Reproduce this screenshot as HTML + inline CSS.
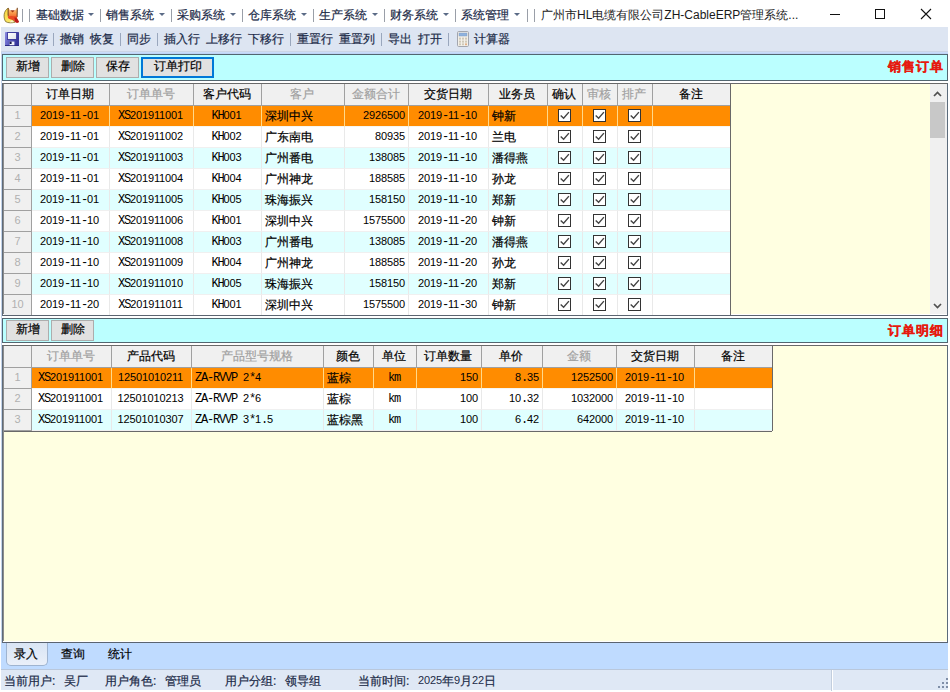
<!DOCTYPE html><html><head><meta charset="utf-8"><title>ZH-CableERP</title><style>
*{margin:0;padding:0;box-sizing:border-box}
html,body{width:950px;height:692px;overflow:hidden;background:#fff}
body{position:relative;-webkit-text-stroke:0.2px;font-family:"Liberation Sans",sans-serif;font-size:12px;line-height:12px;color:#000}
.abs{position:absolute}
.t{position:absolute;white-space:nowrap;font-size:12px;line-height:14px;height:14px}
.m{font-family:"Liberation Mono",monospace;font-size:12px;letter-spacing:-1.2px;position:relative;top:-1px}
.n,.m{-webkit-text-stroke:0}
.n{font-family:"Liberation Sans",sans-serif;font-size:11px;letter-spacing:-0.12px;position:relative;top:-1px}
/* title/menu bar */
#menubar{position:absolute;left:0;top:0;width:950px;height:27px;background:#fff}
.msep{position:absolute;top:9px;width:1px;height:13px;background:#9a9fa8}
.mt{position:absolute;top:8px;color:#1b2a47;font-size:12px;line-height:14px;white-space:nowrap}
.marr{position:absolute;top:13px;width:0;height:0;border-left:3px solid transparent;border-right:3px solid transparent;border-top:3px solid #5b6b86}
/* toolbar */
#toolbar{position:absolute;left:1px;top:27px;width:947px;height:25px;background:#dde5f2}
.tsep{position:absolute;top:33px;width:1px;height:13px;background:#9aa7bd}
.tt{position:absolute;top:32px;color:#1b2a47;font-size:12px;line-height:14px;white-space:nowrap}
/* panels */
.panel{position:absolute;left:2px;width:946px;background:#bbffff;border:1px solid #526670}
.btn{position:absolute;height:21px;background:#e1e1e1;border:1px solid #adadad;text-align:center;font-size:12px;line-height:17px;color:#000}
.btn.focus{border:2px solid #0078d7;line-height:15px}
.ptitle{position:absolute;-webkit-text-stroke:0.25px;right:6px;color:#e61a0f;font-weight:bold;font-size:13px;letter-spacing:1px;line-height:16px;white-space:nowrap}
/* grids */
.grid{position:absolute;left:2px;width:946px;background:#ffffe1;border-top:1px solid #696969;border-left:1px solid #5f6b78;border-right:1px solid #5b6b7b;border-bottom:1px solid #5b6470;overflow:hidden}
.cell{position:absolute;height:21px;overflow:hidden;white-space:nowrap;font-size:12px;line-height:14px;padding-top:3px}
.hd{background:#f0f0f0;border-right:1px solid #a0a0a0;border-bottom:1px solid #a0a0a0;text-align:center;color:#000;padding-top:3px;padding-right:2px}
.hd.ro{color:#a0a0a0}
.rh{background:#f0f0f0;border-right:1px solid #a0a0a0;border-bottom:1px solid #a0a0a0;text-align:center;color:#b0b0b0}
.d{border-right:1px solid #e9e9e9;border-bottom:1px solid #f0f0f0;padding-left:3px;padding-right:3px}
.d.c{text-align:center;padding-right:5px}.d.r{text-align:right}.d.l{text-align:left}
.r0{background:#fff}.r1{background:#e0ffff}
.sel{background:#ff8c00;border-right:1px solid #ffd98a;border-bottom:1px solid #f6f6f0}
.cb{position:absolute;width:13px;height:13px;background:#fff;border:1px solid #333}
.cb svg{position:absolute;left:-1px;top:-1px}
</style></head><body>
<div id="menubar">
<svg class="abs" style="left:3px;top:7px" width="17" height="17" viewBox="0 0 17 17">
<defs><linearGradient id="fx" x1="0" y1="0" x2="0" y2="1"><stop offset="0" stop-color="#fdc88a"/><stop offset="0.45" stop-color="#f99a4a"/><stop offset="1" stop-color="#ee4a22"/></linearGradient>
<linearGradient id="fy" x1="0" y1="0" x2="1" y2="1"><stop offset="0" stop-color="#f7d23c"/><stop offset="1" stop-color="#fdf27a"/></linearGradient></defs>
<path d="M5.2 1.2 C0.6 3.5 0 10.5 2.6 14.6 C5 16.2 9.5 16 12 15.2 L8 11 L5.2 8 Z" fill="url(#fy)" stroke="#7a6a2a" stroke-width="0.8"/>
<path d="M5.3 1 L7.4 3.4 L9.6 4.6 L11.8 3.4 L14.4 0.8 L14.2 10.6 L10 12.4 L5 11.2 Z" fill="url(#fx)"/>
<path d="M7.2 3.3 L11.9 3.3 L9.6 5.4 Z" fill="#a8380f"/>
<path d="M5.3 1 L5.2 9" stroke="#7a4a18" stroke-width="0.9" fill="none"/>
<path d="M14.3 0.8 L14.1 10" stroke="#5a3014" stroke-width="0.9" fill="none"/>
<path d="M4.4 9.6 C6.5 8.6 10 9 14 9.4 L14.1 11.4 L16 15 C15 16.1 13 15.9 12.2 15 L10 12.8 C7.8 13 5.4 11.8 4.4 9.6 Z" fill="#ea4a22"/>
<path d="M11.4 10.6 C13 10.2 14.6 11.6 16 14.8 C15.2 16.2 13.2 16 12.3 15 Z" fill="#b81a1a"/>
<path d="M8.8 13.2 L11.2 15.3 L6.6 15.3 Z" fill="#fbf0d4"/>
</svg>
<div class="msep" style="left:22px"></div>
<div class="msep" style="left:29px"></div>
<div class="mt" style="left:36px">基础数据</div>
<div class="marr" style="left:88px"></div>
<div class="msep" style="left:100px"></div>
<div class="mt" style="left:106px">销售系统</div>
<div class="marr" style="left:159px"></div>
<div class="msep" style="left:171px"></div>
<div class="mt" style="left:177px">采购系统</div>
<div class="marr" style="left:230px"></div>
<div class="msep" style="left:242px"></div>
<div class="mt" style="left:248px">仓库系统</div>
<div class="marr" style="left:301px"></div>
<div class="msep" style="left:313px"></div>
<div class="mt" style="left:319px">生产系统</div>
<div class="marr" style="left:372px"></div>
<div class="msep" style="left:384px"></div>
<div class="mt" style="left:390px">财务系统</div>
<div class="marr" style="left:443px"></div>
<div class="msep" style="left:455px"></div>
<div class="mt" style="left:461px">系统管理</div>
<div class="marr" style="left:514px"></div>
<div class="msep" style="left:527px"></div>
<div class="msep" style="left:534px"></div>
<div class="mt" style="left:541px;color:#1a1a1a;-webkit-text-stroke:0">广州市HL电缆有限公司ZH-CableERP管理系统...</div>
<div class="abs" style="left:830px;top:14px;width:10px;height:1px;background:#111"></div>
<div class="abs" style="left:875px;top:9px;width:10px;height:10px;border:1px solid #111"></div>
<svg class="abs" style="left:920px;top:8px" width="12" height="12" viewBox="0 0 12 12"><path d="M1 1 L11 11 M11 1 L1 11" stroke="#111" stroke-width="1.1" fill="none"/></svg>
</div>
<div id="toolbar"></div>
<div class="abs" style="left:1px;top:51px;width:947px;height:1px;background:#ccd5e5"></div>
<div class="abs" style="left:1px;top:52px;width:947px;height:1px;background:#c9dcfa"></div>
<div class="abs" style="left:1px;top:53px;width:947px;height:1px;background:#bfd4f5"></div>
<svg class="abs" style="left:5px;top:32px" width="14" height="14" viewBox="0 0 14 14">
<defs><linearGradient id="sv" x1="0" y1="0" x2="1" y2="0.3"><stop offset="0" stop-color="#8a8ae0"/><stop offset="0.5" stop-color="#5a5abe"/><stop offset="1" stop-color="#36369a"/></linearGradient>
<linearGradient id="sw" x1="0" y1="0" x2="1" y2="1"><stop offset="0" stop-color="#ffffff"/><stop offset="1" stop-color="#dfe4ea"/></linearGradient></defs>
<rect x="0" y="0" width="14" height="14" rx="0.6" fill="url(#sv)"/>
<rect x="0" y="13" width="14" height="1" fill="#2c2c86"/>
<rect x="3" y="1" width="8.2" height="6" fill="url(#sw)"/>
<rect x="2.4" y="0.6" width="9.4" height="7" fill="none" stroke="#3a3a96" stroke-width="0.8"/>
<rect x="4.6" y="9.6" width="4.8" height="3.6" fill="#f2f4fa"/>
<rect x="4.6" y="9.6" width="2" height="2.4" fill="#16164a"/>
</svg>
<div class="tt" style="left:24px">保存</div>
<div class="tt" style="left:60px">撤销</div>
<div class="tt" style="left:90px">恢复</div>
<div class="tt" style="left:127px">同步</div>
<div class="tt" style="left:164px">插入行</div>
<div class="tt" style="left:206px">上移行</div>
<div class="tt" style="left:248px">下移行</div>
<div class="tt" style="left:297px">重置行</div>
<div class="tt" style="left:339px">重置列</div>
<div class="tt" style="left:388px">导出</div>
<div class="tt" style="left:418px">打开</div>
<div class="tt" style="left:474px">计算器</div>
<div class="tsep" style="left:53px"></div>
<div class="tsep" style="left:120px"></div>
<div class="tsep" style="left:157px"></div>
<div class="tsep" style="left:290px"></div>
<div class="tsep" style="left:381px"></div>
<div class="tsep" style="left:448px"></div>
<svg class="abs" style="left:457px;top:31px" width="12" height="16" viewBox="0 0 12 16">
<rect x="0.5" y="0.5" width="11" height="15" rx="1.2" fill="#f3f0e9" stroke="#a3a6ae"/>
<rect x="2" y="2" width="8" height="3" fill="#8fb2de" stroke="#7f9cc4" stroke-width="0.5"/>
<g fill="#cfc8b8"><rect x="2" y="6.6" width="2" height="2"/><rect x="5" y="6.6" width="2" height="2"/><rect x="8" y="6.6" width="2" height="2"/>
<rect x="2" y="9.6" width="2" height="2"/><rect x="5" y="9.6" width="2" height="2"/><rect x="8" y="9.6" width="2" height="2"/>
<rect x="2" y="12.4" width="2" height="1.8"/><rect x="5" y="12.4" width="2" height="1.8"/><rect x="8" y="12.4" width="2" height="1.8" fill="#e0b088"/></g>
</svg>
<div class="abs" style="left:1px;top:52px;width:1px;height:591px;background:#c3d3ea"></div>
<div class="panel" style="top:54px;height:27px"></div>
<div class="btn" style="left:6px;top:57px;width:43px">新增</div>
<div class="btn" style="left:51px;top:57px;width:43px">删除</div>
<div class="btn" style="left:96px;top:57px;width:43px">保存</div>
<div class="btn focus" style="left:141px;top:57px;width:73px">订单打印</div>
<div class="ptitle" style="top:59px">销售订单</div>
<div class="grid" style="top:83px;height:233px">
<div class="abs" style="left:0;top:0;width:1px;height:233px;background:#8c8c8c"></div>
<div class="abs" style="left:0;top:230px;width:944px;height:1px;background:#fff"></div>
<div class="cell hd" style="left:1px;top:0px;width:28px;height:22px;"></div>
<div class="cell hd" style="left:29px;top:0px;width:78px;height:22px;">订单日期</div>
<div class="cell hd ro" style="left:107px;top:0px;width:84px;height:22px;">订单单号</div>
<div class="cell hd" style="left:191px;top:0px;width:68px;height:22px;">客户代码</div>
<div class="cell hd ro" style="left:259px;top:0px;width:83px;height:22px;">客户</div>
<div class="cell hd ro" style="left:342px;top:0px;width:64px;height:22px;">金额合计</div>
<div class="cell hd" style="left:406px;top:0px;width:80px;height:22px;">交货日期</div>
<div class="cell hd" style="left:486px;top:0px;width:59px;height:22px;">业务员</div>
<div class="cell hd" style="left:545px;top:0px;width:35px;height:22px;">确认</div>
<div class="cell hd ro" style="left:580px;top:0px;width:35px;height:22px;">审核</div>
<div class="cell hd ro" style="left:615px;top:0px;width:35px;height:22px;">排产</div>
<div class="cell hd" style="left:650px;top:0px;width:78px;height:22px;">备注</div>
<div class="cell rh" style="left:1px;top:22px;width:28px;height:21px;"><span class="n">1</span></div>
<div class="cell d c sel" style="left:29px;top:22px;width:78px;height:21px;"><span class="n">2019</span><span class="m">-</span><span class="n">11</span><span class="m">-</span><span class="n">01</span></div>
<div class="cell d c sel" style="left:107px;top:22px;width:84px;height:21px;"><span class="m">XS</span><span class="n">201911001</span></div>
<div class="cell d c sel" style="left:191px;top:22px;width:68px;height:21px;"><span class="m">KH</span><span class="n">001</span></div>
<div class="cell d l sel" style="left:259px;top:22px;width:83px;height:21px;">深圳中兴</div>
<div class="cell d r sel" style="left:342px;top:22px;width:64px;height:21px;"><span class="n">2926500</span></div>
<div class="cell d c sel" style="left:406px;top:22px;width:80px;height:21px;"><span class="n">2019</span><span class="m">-</span><span class="n">11</span><span class="m">-</span><span class="n">10</span></div>
<div class="cell d l sel" style="left:486px;top:22px;width:59px;height:21px;">钟新</div>
<div class="cell d sel" style="left:545px;top:22px;width:35px;height:21px;padding:0;"><div class="cb" style="left:10px;top:3px"><svg width="13" height="13" viewBox="0 0 13 13"><path d="M2.7 6.5 L5.6 9.3 L10.9 3.1" stroke="#444" stroke-width="1.4" fill="none"/></svg></div></div>
<div class="cell d sel" style="left:580px;top:22px;width:35px;height:21px;padding:0;"><div class="cb" style="left:10px;top:3px"><svg width="13" height="13" viewBox="0 0 13 13"><path d="M2.7 6.5 L5.6 9.3 L10.9 3.1" stroke="#444" stroke-width="1.4" fill="none"/></svg></div></div>
<div class="cell d sel" style="left:615px;top:22px;width:35px;height:21px;padding:0;"><div class="cb" style="left:10px;top:3px"><svg width="13" height="13" viewBox="0 0 13 13"><path d="M2.7 6.5 L5.6 9.3 L10.9 3.1" stroke="#444" stroke-width="1.4" fill="none"/></svg></div></div>
<div class="cell d l sel" style="left:650px;top:22px;width:78px;height:21px;"></div>
<div class="cell rh" style="left:1px;top:43px;width:28px;height:21px;"><span class="n">2</span></div>
<div class="cell d c r0" style="left:29px;top:43px;width:78px;height:21px;"><span class="n">2019</span><span class="m">-</span><span class="n">11</span><span class="m">-</span><span class="n">01</span></div>
<div class="cell d c r0" style="left:107px;top:43px;width:84px;height:21px;"><span class="m">XS</span><span class="n">201911002</span></div>
<div class="cell d c r0" style="left:191px;top:43px;width:68px;height:21px;"><span class="m">KH</span><span class="n">002</span></div>
<div class="cell d l r0" style="left:259px;top:43px;width:83px;height:21px;">广东南电</div>
<div class="cell d r r0" style="left:342px;top:43px;width:64px;height:21px;"><span class="n">80935</span></div>
<div class="cell d c r0" style="left:406px;top:43px;width:80px;height:21px;"><span class="n">2019</span><span class="m">-</span><span class="n">11</span><span class="m">-</span><span class="n">10</span></div>
<div class="cell d l r0" style="left:486px;top:43px;width:59px;height:21px;">兰电</div>
<div class="cell d r0" style="left:545px;top:43px;width:35px;height:21px;padding:0;"><div class="cb" style="left:10px;top:3px"><svg width="13" height="13" viewBox="0 0 13 13"><path d="M2.7 6.5 L5.6 9.3 L10.9 3.1" stroke="#444" stroke-width="1.4" fill="none"/></svg></div></div>
<div class="cell d r0" style="left:580px;top:43px;width:35px;height:21px;padding:0;"><div class="cb" style="left:10px;top:3px"><svg width="13" height="13" viewBox="0 0 13 13"><path d="M2.7 6.5 L5.6 9.3 L10.9 3.1" stroke="#444" stroke-width="1.4" fill="none"/></svg></div></div>
<div class="cell d r0" style="left:615px;top:43px;width:35px;height:21px;padding:0;"><div class="cb" style="left:10px;top:3px"><svg width="13" height="13" viewBox="0 0 13 13"><path d="M2.7 6.5 L5.6 9.3 L10.9 3.1" stroke="#444" stroke-width="1.4" fill="none"/></svg></div></div>
<div class="cell d l r0" style="left:650px;top:43px;width:78px;height:21px;"></div>
<div class="cell rh" style="left:1px;top:64px;width:28px;height:21px;"><span class="n">3</span></div>
<div class="cell d c r1" style="left:29px;top:64px;width:78px;height:21px;"><span class="n">2019</span><span class="m">-</span><span class="n">11</span><span class="m">-</span><span class="n">01</span></div>
<div class="cell d c r1" style="left:107px;top:64px;width:84px;height:21px;"><span class="m">XS</span><span class="n">201911003</span></div>
<div class="cell d c r1" style="left:191px;top:64px;width:68px;height:21px;"><span class="m">KH</span><span class="n">003</span></div>
<div class="cell d l r1" style="left:259px;top:64px;width:83px;height:21px;">广州番电</div>
<div class="cell d r r1" style="left:342px;top:64px;width:64px;height:21px;"><span class="n">138085</span></div>
<div class="cell d c r1" style="left:406px;top:64px;width:80px;height:21px;"><span class="n">2019</span><span class="m">-</span><span class="n">11</span><span class="m">-</span><span class="n">10</span></div>
<div class="cell d l r1" style="left:486px;top:64px;width:59px;height:21px;">潘得燕</div>
<div class="cell d r1" style="left:545px;top:64px;width:35px;height:21px;padding:0;"><div class="cb" style="left:10px;top:3px"><svg width="13" height="13" viewBox="0 0 13 13"><path d="M2.7 6.5 L5.6 9.3 L10.9 3.1" stroke="#444" stroke-width="1.4" fill="none"/></svg></div></div>
<div class="cell d r1" style="left:580px;top:64px;width:35px;height:21px;padding:0;"><div class="cb" style="left:10px;top:3px"><svg width="13" height="13" viewBox="0 0 13 13"><path d="M2.7 6.5 L5.6 9.3 L10.9 3.1" stroke="#444" stroke-width="1.4" fill="none"/></svg></div></div>
<div class="cell d r1" style="left:615px;top:64px;width:35px;height:21px;padding:0;"><div class="cb" style="left:10px;top:3px"><svg width="13" height="13" viewBox="0 0 13 13"><path d="M2.7 6.5 L5.6 9.3 L10.9 3.1" stroke="#444" stroke-width="1.4" fill="none"/></svg></div></div>
<div class="cell d l r1" style="left:650px;top:64px;width:78px;height:21px;"></div>
<div class="cell rh" style="left:1px;top:85px;width:28px;height:21px;"><span class="n">4</span></div>
<div class="cell d c r0" style="left:29px;top:85px;width:78px;height:21px;"><span class="n">2019</span><span class="m">-</span><span class="n">11</span><span class="m">-</span><span class="n">01</span></div>
<div class="cell d c r0" style="left:107px;top:85px;width:84px;height:21px;"><span class="m">XS</span><span class="n">201911004</span></div>
<div class="cell d c r0" style="left:191px;top:85px;width:68px;height:21px;"><span class="m">KH</span><span class="n">004</span></div>
<div class="cell d l r0" style="left:259px;top:85px;width:83px;height:21px;">广州神龙</div>
<div class="cell d r r0" style="left:342px;top:85px;width:64px;height:21px;"><span class="n">188585</span></div>
<div class="cell d c r0" style="left:406px;top:85px;width:80px;height:21px;"><span class="n">2019</span><span class="m">-</span><span class="n">11</span><span class="m">-</span><span class="n">10</span></div>
<div class="cell d l r0" style="left:486px;top:85px;width:59px;height:21px;">孙龙</div>
<div class="cell d r0" style="left:545px;top:85px;width:35px;height:21px;padding:0;"><div class="cb" style="left:10px;top:3px"><svg width="13" height="13" viewBox="0 0 13 13"><path d="M2.7 6.5 L5.6 9.3 L10.9 3.1" stroke="#444" stroke-width="1.4" fill="none"/></svg></div></div>
<div class="cell d r0" style="left:580px;top:85px;width:35px;height:21px;padding:0;"><div class="cb" style="left:10px;top:3px"><svg width="13" height="13" viewBox="0 0 13 13"><path d="M2.7 6.5 L5.6 9.3 L10.9 3.1" stroke="#444" stroke-width="1.4" fill="none"/></svg></div></div>
<div class="cell d r0" style="left:615px;top:85px;width:35px;height:21px;padding:0;"><div class="cb" style="left:10px;top:3px"><svg width="13" height="13" viewBox="0 0 13 13"><path d="M2.7 6.5 L5.6 9.3 L10.9 3.1" stroke="#444" stroke-width="1.4" fill="none"/></svg></div></div>
<div class="cell d l r0" style="left:650px;top:85px;width:78px;height:21px;"></div>
<div class="cell rh" style="left:1px;top:106px;width:28px;height:21px;"><span class="n">5</span></div>
<div class="cell d c r1" style="left:29px;top:106px;width:78px;height:21px;"><span class="n">2019</span><span class="m">-</span><span class="n">11</span><span class="m">-</span><span class="n">01</span></div>
<div class="cell d c r1" style="left:107px;top:106px;width:84px;height:21px;"><span class="m">XS</span><span class="n">201911005</span></div>
<div class="cell d c r1" style="left:191px;top:106px;width:68px;height:21px;"><span class="m">KH</span><span class="n">005</span></div>
<div class="cell d l r1" style="left:259px;top:106px;width:83px;height:21px;">珠海振兴</div>
<div class="cell d r r1" style="left:342px;top:106px;width:64px;height:21px;"><span class="n">158150</span></div>
<div class="cell d c r1" style="left:406px;top:106px;width:80px;height:21px;"><span class="n">2019</span><span class="m">-</span><span class="n">11</span><span class="m">-</span><span class="n">10</span></div>
<div class="cell d l r1" style="left:486px;top:106px;width:59px;height:21px;">郑新</div>
<div class="cell d r1" style="left:545px;top:106px;width:35px;height:21px;padding:0;"><div class="cb" style="left:10px;top:3px"><svg width="13" height="13" viewBox="0 0 13 13"><path d="M2.7 6.5 L5.6 9.3 L10.9 3.1" stroke="#444" stroke-width="1.4" fill="none"/></svg></div></div>
<div class="cell d r1" style="left:580px;top:106px;width:35px;height:21px;padding:0;"><div class="cb" style="left:10px;top:3px"><svg width="13" height="13" viewBox="0 0 13 13"><path d="M2.7 6.5 L5.6 9.3 L10.9 3.1" stroke="#444" stroke-width="1.4" fill="none"/></svg></div></div>
<div class="cell d r1" style="left:615px;top:106px;width:35px;height:21px;padding:0;"><div class="cb" style="left:10px;top:3px"><svg width="13" height="13" viewBox="0 0 13 13"><path d="M2.7 6.5 L5.6 9.3 L10.9 3.1" stroke="#444" stroke-width="1.4" fill="none"/></svg></div></div>
<div class="cell d l r1" style="left:650px;top:106px;width:78px;height:21px;"></div>
<div class="cell rh" style="left:1px;top:127px;width:28px;height:21px;"><span class="n">6</span></div>
<div class="cell d c r0" style="left:29px;top:127px;width:78px;height:21px;"><span class="n">2019</span><span class="m">-</span><span class="n">11</span><span class="m">-</span><span class="n">10</span></div>
<div class="cell d c r0" style="left:107px;top:127px;width:84px;height:21px;"><span class="m">XS</span><span class="n">201911006</span></div>
<div class="cell d c r0" style="left:191px;top:127px;width:68px;height:21px;"><span class="m">KH</span><span class="n">001</span></div>
<div class="cell d l r0" style="left:259px;top:127px;width:83px;height:21px;">深圳中兴</div>
<div class="cell d r r0" style="left:342px;top:127px;width:64px;height:21px;"><span class="n">1575500</span></div>
<div class="cell d c r0" style="left:406px;top:127px;width:80px;height:21px;"><span class="n">2019</span><span class="m">-</span><span class="n">11</span><span class="m">-</span><span class="n">20</span></div>
<div class="cell d l r0" style="left:486px;top:127px;width:59px;height:21px;">钟新</div>
<div class="cell d r0" style="left:545px;top:127px;width:35px;height:21px;padding:0;"><div class="cb" style="left:10px;top:3px"><svg width="13" height="13" viewBox="0 0 13 13"><path d="M2.7 6.5 L5.6 9.3 L10.9 3.1" stroke="#444" stroke-width="1.4" fill="none"/></svg></div></div>
<div class="cell d r0" style="left:580px;top:127px;width:35px;height:21px;padding:0;"><div class="cb" style="left:10px;top:3px"><svg width="13" height="13" viewBox="0 0 13 13"><path d="M2.7 6.5 L5.6 9.3 L10.9 3.1" stroke="#444" stroke-width="1.4" fill="none"/></svg></div></div>
<div class="cell d r0" style="left:615px;top:127px;width:35px;height:21px;padding:0;"><div class="cb" style="left:10px;top:3px"><svg width="13" height="13" viewBox="0 0 13 13"><path d="M2.7 6.5 L5.6 9.3 L10.9 3.1" stroke="#444" stroke-width="1.4" fill="none"/></svg></div></div>
<div class="cell d l r0" style="left:650px;top:127px;width:78px;height:21px;"></div>
<div class="cell rh" style="left:1px;top:148px;width:28px;height:21px;"><span class="n">7</span></div>
<div class="cell d c r1" style="left:29px;top:148px;width:78px;height:21px;"><span class="n">2019</span><span class="m">-</span><span class="n">11</span><span class="m">-</span><span class="n">10</span></div>
<div class="cell d c r1" style="left:107px;top:148px;width:84px;height:21px;"><span class="m">XS</span><span class="n">201911008</span></div>
<div class="cell d c r1" style="left:191px;top:148px;width:68px;height:21px;"><span class="m">KH</span><span class="n">003</span></div>
<div class="cell d l r1" style="left:259px;top:148px;width:83px;height:21px;">广州番电</div>
<div class="cell d r r1" style="left:342px;top:148px;width:64px;height:21px;"><span class="n">138085</span></div>
<div class="cell d c r1" style="left:406px;top:148px;width:80px;height:21px;"><span class="n">2019</span><span class="m">-</span><span class="n">11</span><span class="m">-</span><span class="n">20</span></div>
<div class="cell d l r1" style="left:486px;top:148px;width:59px;height:21px;">潘得燕</div>
<div class="cell d r1" style="left:545px;top:148px;width:35px;height:21px;padding:0;"><div class="cb" style="left:10px;top:3px"><svg width="13" height="13" viewBox="0 0 13 13"><path d="M2.7 6.5 L5.6 9.3 L10.9 3.1" stroke="#444" stroke-width="1.4" fill="none"/></svg></div></div>
<div class="cell d r1" style="left:580px;top:148px;width:35px;height:21px;padding:0;"><div class="cb" style="left:10px;top:3px"><svg width="13" height="13" viewBox="0 0 13 13"><path d="M2.7 6.5 L5.6 9.3 L10.9 3.1" stroke="#444" stroke-width="1.4" fill="none"/></svg></div></div>
<div class="cell d r1" style="left:615px;top:148px;width:35px;height:21px;padding:0;"><div class="cb" style="left:10px;top:3px"><svg width="13" height="13" viewBox="0 0 13 13"><path d="M2.7 6.5 L5.6 9.3 L10.9 3.1" stroke="#444" stroke-width="1.4" fill="none"/></svg></div></div>
<div class="cell d l r1" style="left:650px;top:148px;width:78px;height:21px;"></div>
<div class="cell rh" style="left:1px;top:169px;width:28px;height:21px;"><span class="n">8</span></div>
<div class="cell d c r0" style="left:29px;top:169px;width:78px;height:21px;"><span class="n">2019</span><span class="m">-</span><span class="n">11</span><span class="m">-</span><span class="n">10</span></div>
<div class="cell d c r0" style="left:107px;top:169px;width:84px;height:21px;"><span class="m">XS</span><span class="n">201911009</span></div>
<div class="cell d c r0" style="left:191px;top:169px;width:68px;height:21px;"><span class="m">KH</span><span class="n">004</span></div>
<div class="cell d l r0" style="left:259px;top:169px;width:83px;height:21px;">广州神龙</div>
<div class="cell d r r0" style="left:342px;top:169px;width:64px;height:21px;"><span class="n">188585</span></div>
<div class="cell d c r0" style="left:406px;top:169px;width:80px;height:21px;"><span class="n">2019</span><span class="m">-</span><span class="n">11</span><span class="m">-</span><span class="n">20</span></div>
<div class="cell d l r0" style="left:486px;top:169px;width:59px;height:21px;">孙龙</div>
<div class="cell d r0" style="left:545px;top:169px;width:35px;height:21px;padding:0;"><div class="cb" style="left:10px;top:3px"><svg width="13" height="13" viewBox="0 0 13 13"><path d="M2.7 6.5 L5.6 9.3 L10.9 3.1" stroke="#444" stroke-width="1.4" fill="none"/></svg></div></div>
<div class="cell d r0" style="left:580px;top:169px;width:35px;height:21px;padding:0;"><div class="cb" style="left:10px;top:3px"><svg width="13" height="13" viewBox="0 0 13 13"><path d="M2.7 6.5 L5.6 9.3 L10.9 3.1" stroke="#444" stroke-width="1.4" fill="none"/></svg></div></div>
<div class="cell d r0" style="left:615px;top:169px;width:35px;height:21px;padding:0;"><div class="cb" style="left:10px;top:3px"><svg width="13" height="13" viewBox="0 0 13 13"><path d="M2.7 6.5 L5.6 9.3 L10.9 3.1" stroke="#444" stroke-width="1.4" fill="none"/></svg></div></div>
<div class="cell d l r0" style="left:650px;top:169px;width:78px;height:21px;"></div>
<div class="cell rh" style="left:1px;top:190px;width:28px;height:21px;"><span class="n">9</span></div>
<div class="cell d c r1" style="left:29px;top:190px;width:78px;height:21px;"><span class="n">2019</span><span class="m">-</span><span class="n">11</span><span class="m">-</span><span class="n">10</span></div>
<div class="cell d c r1" style="left:107px;top:190px;width:84px;height:21px;"><span class="m">XS</span><span class="n">201911010</span></div>
<div class="cell d c r1" style="left:191px;top:190px;width:68px;height:21px;"><span class="m">KH</span><span class="n">005</span></div>
<div class="cell d l r1" style="left:259px;top:190px;width:83px;height:21px;">珠海振兴</div>
<div class="cell d r r1" style="left:342px;top:190px;width:64px;height:21px;"><span class="n">158150</span></div>
<div class="cell d c r1" style="left:406px;top:190px;width:80px;height:21px;"><span class="n">2019</span><span class="m">-</span><span class="n">11</span><span class="m">-</span><span class="n">20</span></div>
<div class="cell d l r1" style="left:486px;top:190px;width:59px;height:21px;">郑新</div>
<div class="cell d r1" style="left:545px;top:190px;width:35px;height:21px;padding:0;"><div class="cb" style="left:10px;top:3px"><svg width="13" height="13" viewBox="0 0 13 13"><path d="M2.7 6.5 L5.6 9.3 L10.9 3.1" stroke="#444" stroke-width="1.4" fill="none"/></svg></div></div>
<div class="cell d r1" style="left:580px;top:190px;width:35px;height:21px;padding:0;"><div class="cb" style="left:10px;top:3px"><svg width="13" height="13" viewBox="0 0 13 13"><path d="M2.7 6.5 L5.6 9.3 L10.9 3.1" stroke="#444" stroke-width="1.4" fill="none"/></svg></div></div>
<div class="cell d r1" style="left:615px;top:190px;width:35px;height:21px;padding:0;"><div class="cb" style="left:10px;top:3px"><svg width="13" height="13" viewBox="0 0 13 13"><path d="M2.7 6.5 L5.6 9.3 L10.9 3.1" stroke="#444" stroke-width="1.4" fill="none"/></svg></div></div>
<div class="cell d l r1" style="left:650px;top:190px;width:78px;height:21px;"></div>
<div class="cell rh" style="left:1px;top:211px;width:28px;height:21px;"><span class="n">10</span></div>
<div class="cell d c r0" style="left:29px;top:211px;width:78px;height:21px;"><span class="n">2019</span><span class="m">-</span><span class="n">11</span><span class="m">-</span><span class="n">20</span></div>
<div class="cell d c r0" style="left:107px;top:211px;width:84px;height:21px;"><span class="m">XS</span><span class="n">201911011</span></div>
<div class="cell d c r0" style="left:191px;top:211px;width:68px;height:21px;"><span class="m">KH</span><span class="n">001</span></div>
<div class="cell d l r0" style="left:259px;top:211px;width:83px;height:21px;">深圳中兴</div>
<div class="cell d r r0" style="left:342px;top:211px;width:64px;height:21px;"><span class="n">1575500</span></div>
<div class="cell d c r0" style="left:406px;top:211px;width:80px;height:21px;"><span class="n">2019</span><span class="m">-</span><span class="n">11</span><span class="m">-</span><span class="n">30</span></div>
<div class="cell d l r0" style="left:486px;top:211px;width:59px;height:21px;">钟新</div>
<div class="cell d r0" style="left:545px;top:211px;width:35px;height:21px;padding:0;"><div class="cb" style="left:10px;top:3px"><svg width="13" height="13" viewBox="0 0 13 13"><path d="M2.7 6.5 L5.6 9.3 L10.9 3.1" stroke="#444" stroke-width="1.4" fill="none"/></svg></div></div>
<div class="cell d r0" style="left:580px;top:211px;width:35px;height:21px;padding:0;"><div class="cb" style="left:10px;top:3px"><svg width="13" height="13" viewBox="0 0 13 13"><path d="M2.7 6.5 L5.6 9.3 L10.9 3.1" stroke="#444" stroke-width="1.4" fill="none"/></svg></div></div>
<div class="cell d r0" style="left:615px;top:211px;width:35px;height:21px;padding:0;"><div class="cb" style="left:10px;top:3px"><svg width="13" height="13" viewBox="0 0 13 13"><path d="M2.7 6.5 L5.6 9.3 L10.9 3.1" stroke="#444" stroke-width="1.4" fill="none"/></svg></div></div>
<div class="cell d l r0" style="left:650px;top:211px;width:78px;height:21px;"></div>
<div class="abs" style="left:727px;top:0;width:1px;height:232px;background:#696969"></div>
<div class="abs" style="left:927px;top:0;width:17px;height:230px;background:#f0f0f0"></div>
<div class="abs" style="left:927px;top:18px;width:15px;height:36px;background:#c8c8c8"></div>
<svg class="abs" style="left:930px;top:7px" width="9" height="6" viewBox="0 0 9 6"><path d="M1 5 L4.5 1.5 L8 5" stroke="#505050" stroke-width="1.7" fill="none"/></svg>
<svg class="abs" style="left:930px;top:219px" width="9" height="6" viewBox="0 0 9 6"><path d="M1 1 L4.5 4.5 L8 1" stroke="#505050" stroke-width="1.7" fill="none"/></svg>
</div>
<div class="panel" style="top:318px;height:25px"></div>
<div class="btn" style="left:6px;top:320px;width:43px">新增</div>
<div class="btn" style="left:51px;top:320px;width:43px">删除</div>
<div class="ptitle" style="top:323px">订单明细</div>
<div class="grid" style="top:345px;height:298px">
<div class="abs" style="left:0;top:0;width:1px;height:298px;background:#8c8c8c"></div>
<div class="abs" style="left:0;top:295px;width:944px;height:1px;background:#fff"></div>
<div class="cell hd" style="left:1px;top:0px;width:28px;height:22px;"></div>
<div class="cell hd ro" style="left:29px;top:0px;width:80px;height:22px;">订单单号</div>
<div class="cell hd" style="left:109px;top:0px;width:80px;height:22px;">产品代码</div>
<div class="cell hd ro" style="left:189px;top:0px;width:132px;height:22px;">产品型号规格</div>
<div class="cell hd" style="left:321px;top:0px;width:50px;height:22px;">颜色</div>
<div class="cell hd" style="left:371px;top:0px;width:43px;height:22px;">单位</div>
<div class="cell hd" style="left:414px;top:0px;width:65px;height:22px;">订单数量</div>
<div class="cell hd" style="left:479px;top:0px;width:61px;height:22px;">单价</div>
<div class="cell hd ro" style="left:540px;top:0px;width:74px;height:22px;">金额</div>
<div class="cell hd" style="left:614px;top:0px;width:78px;height:22px;">交货日期</div>
<div class="cell hd" style="left:692px;top:0px;width:78px;height:22px;">备注</div>
<div class="cell rh" style="left:1px;top:22px;width:28px;height:21px;"><span class="n">1</span></div>
<div class="cell d c sel" style="left:29px;top:22px;width:80px;height:21px;"><span class="m">XS</span><span class="n">201911001</span></div>
<div class="cell d c sel" style="left:109px;top:22px;width:80px;height:21px;"><span class="n">12501010211</span></div>
<div class="cell d l sel" style="left:189px;top:22px;width:132px;height:21px;"><span class="m">ZA-RVVP </span><span class="n">2</span><span class="m">*</span><span class="n">4</span></div>
<div class="cell d l sel" style="left:321px;top:22px;width:50px;height:21px;">蓝棕</div>
<div class="cell d c sel" style="left:371px;top:22px;width:43px;height:21px;"><span class="m">km</span></div>
<div class="cell d r sel" style="left:414px;top:22px;width:65px;height:21px;"><span class="n">150</span></div>
<div class="cell d r sel" style="left:479px;top:22px;width:61px;height:21px;"><span class="n">8</span><span class="m">.</span><span class="n">35</span></div>
<div class="cell d r sel" style="left:540px;top:22px;width:74px;height:21px;"><span class="n">1252500</span></div>
<div class="cell d c sel" style="left:614px;top:22px;width:78px;height:21px;"><span class="n">2019</span><span class="m">-</span><span class="n">11</span><span class="m">-</span><span class="n">10</span></div>
<div class="cell d l sel" style="left:692px;top:22px;width:78px;height:21px;"></div>
<div class="cell rh" style="left:1px;top:43px;width:28px;height:21px;"><span class="n">2</span></div>
<div class="cell d c r0" style="left:29px;top:43px;width:80px;height:21px;"><span class="m">XS</span><span class="n">201911001</span></div>
<div class="cell d c r0" style="left:109px;top:43px;width:80px;height:21px;"><span class="n">12501010213</span></div>
<div class="cell d l r0" style="left:189px;top:43px;width:132px;height:21px;"><span class="m">ZA-RVVP </span><span class="n">2</span><span class="m">*</span><span class="n">6</span></div>
<div class="cell d l r0" style="left:321px;top:43px;width:50px;height:21px;">蓝棕</div>
<div class="cell d c r0" style="left:371px;top:43px;width:43px;height:21px;"><span class="m">km</span></div>
<div class="cell d r r0" style="left:414px;top:43px;width:65px;height:21px;"><span class="n">100</span></div>
<div class="cell d r r0" style="left:479px;top:43px;width:61px;height:21px;"><span class="n">10</span><span class="m">.</span><span class="n">32</span></div>
<div class="cell d r r0" style="left:540px;top:43px;width:74px;height:21px;"><span class="n">1032000</span></div>
<div class="cell d c r0" style="left:614px;top:43px;width:78px;height:21px;"><span class="n">2019</span><span class="m">-</span><span class="n">11</span><span class="m">-</span><span class="n">10</span></div>
<div class="cell d l r0" style="left:692px;top:43px;width:78px;height:21px;"></div>
<div class="cell rh" style="left:1px;top:64px;width:28px;height:21px;"><span class="n">3</span></div>
<div class="cell d c r1" style="left:29px;top:64px;width:80px;height:21px;"><span class="m">XS</span><span class="n">201911001</span></div>
<div class="cell d c r1" style="left:109px;top:64px;width:80px;height:21px;"><span class="n">12501010307</span></div>
<div class="cell d l r1" style="left:189px;top:64px;width:132px;height:21px;"><span class="m">ZA-RVVP </span><span class="n">3</span><span class="m">*</span><span class="n">1</span><span class="m">.</span><span class="n">5</span></div>
<div class="cell d l r1" style="left:321px;top:64px;width:50px;height:21px;">蓝棕黑</div>
<div class="cell d c r1" style="left:371px;top:64px;width:43px;height:21px;"><span class="m">km</span></div>
<div class="cell d r r1" style="left:414px;top:64px;width:65px;height:21px;"><span class="n">100</span></div>
<div class="cell d r r1" style="left:479px;top:64px;width:61px;height:21px;"><span class="n">6</span><span class="m">.</span><span class="n">42</span></div>
<div class="cell d r r1" style="left:540px;top:64px;width:74px;height:21px;"><span class="n">642000</span></div>
<div class="cell d c r1" style="left:614px;top:64px;width:78px;height:21px;"><span class="n">2019</span><span class="m">-</span><span class="n">11</span><span class="m">-</span><span class="n">10</span></div>
<div class="cell d l r1" style="left:692px;top:64px;width:78px;height:21px;"></div>
<div class="abs" style="left:769px;top:0;width:1px;height:85px;background:#696969"></div>
<div class="abs" style="left:1px;top:85px;width:768px;height:1px;background:#696969"></div>
</div>
<div class="abs" style="left:1px;top:643px;width:947px;height:26px;background:#bfdbff"></div>
<div class="abs" style="left:6px;top:643px;width:42px;height:23px;background:linear-gradient(#d9e5f5,#eaf0f9);border:1px solid #9fb4d0;border-top:none;border-radius:0 0 5px 5px"></div>
<div class="t" style="left:14px;top:647px;color:#000">录入</div>
<div class="t" style="left:61px;top:647px;color:#000">查询</div>
<div class="t" style="left:108px;top:647px;color:#000">统计</div>
<div class="abs" style="left:1px;top:669px;width:947px;height:21px;background:#dfe8f5;border-top:1px solid #b9c7db"></div>
<div class="t" style="left:4px;top:674px;color:#1b2a47">当前用户:</div>
<div class="t" style="left:64px;top:674px;color:#1b2a47">吴厂</div>
<div class="t" style="left:105px;top:674px;color:#1b2a47">用户角色:</div>
<div class="t" style="left:165px;top:674px;color:#1b2a47">管理员</div>
<div class="t" style="left:225px;top:674px;color:#1b2a47">用户分组:</div>
<div class="t" style="left:285px;top:674px;color:#1b2a47">领导组</div>
<div class="t" style="left:358px;top:674px;color:#1b2a47">当前时间:</div>
<div class="t" style="left:418px;top:674px;color:#1b2a47"><span class="n">2025</span>年<span class="n">9</span>月<span class="n">22</span>日</div>
<div class="abs" style="left:831px;top:670px;width:1px;height:21px;background:#c2cede"></div>
<div class="abs" style="left:832px;top:670px;width:1px;height:21px;background:#fff"></div>
<div class="abs" style="left:946px;top:678px;width:2px;height:2px;background:#7f8fa8"></div><div class="abs" style="left:942px;top:682px;width:2px;height:2px;background:#7f8fa8"></div><div class="abs" style="left:946px;top:682px;width:2px;height:2px;background:#7f8fa8"></div><div class="abs" style="left:938px;top:686px;width:2px;height:2px;background:#7f8fa8"></div><div class="abs" style="left:942px;top:686px;width:2px;height:2px;background:#7f8fa8"></div><div class="abs" style="left:946px;top:686px;width:2px;height:2px;background:#7f8fa8"></div>
</body></html>
